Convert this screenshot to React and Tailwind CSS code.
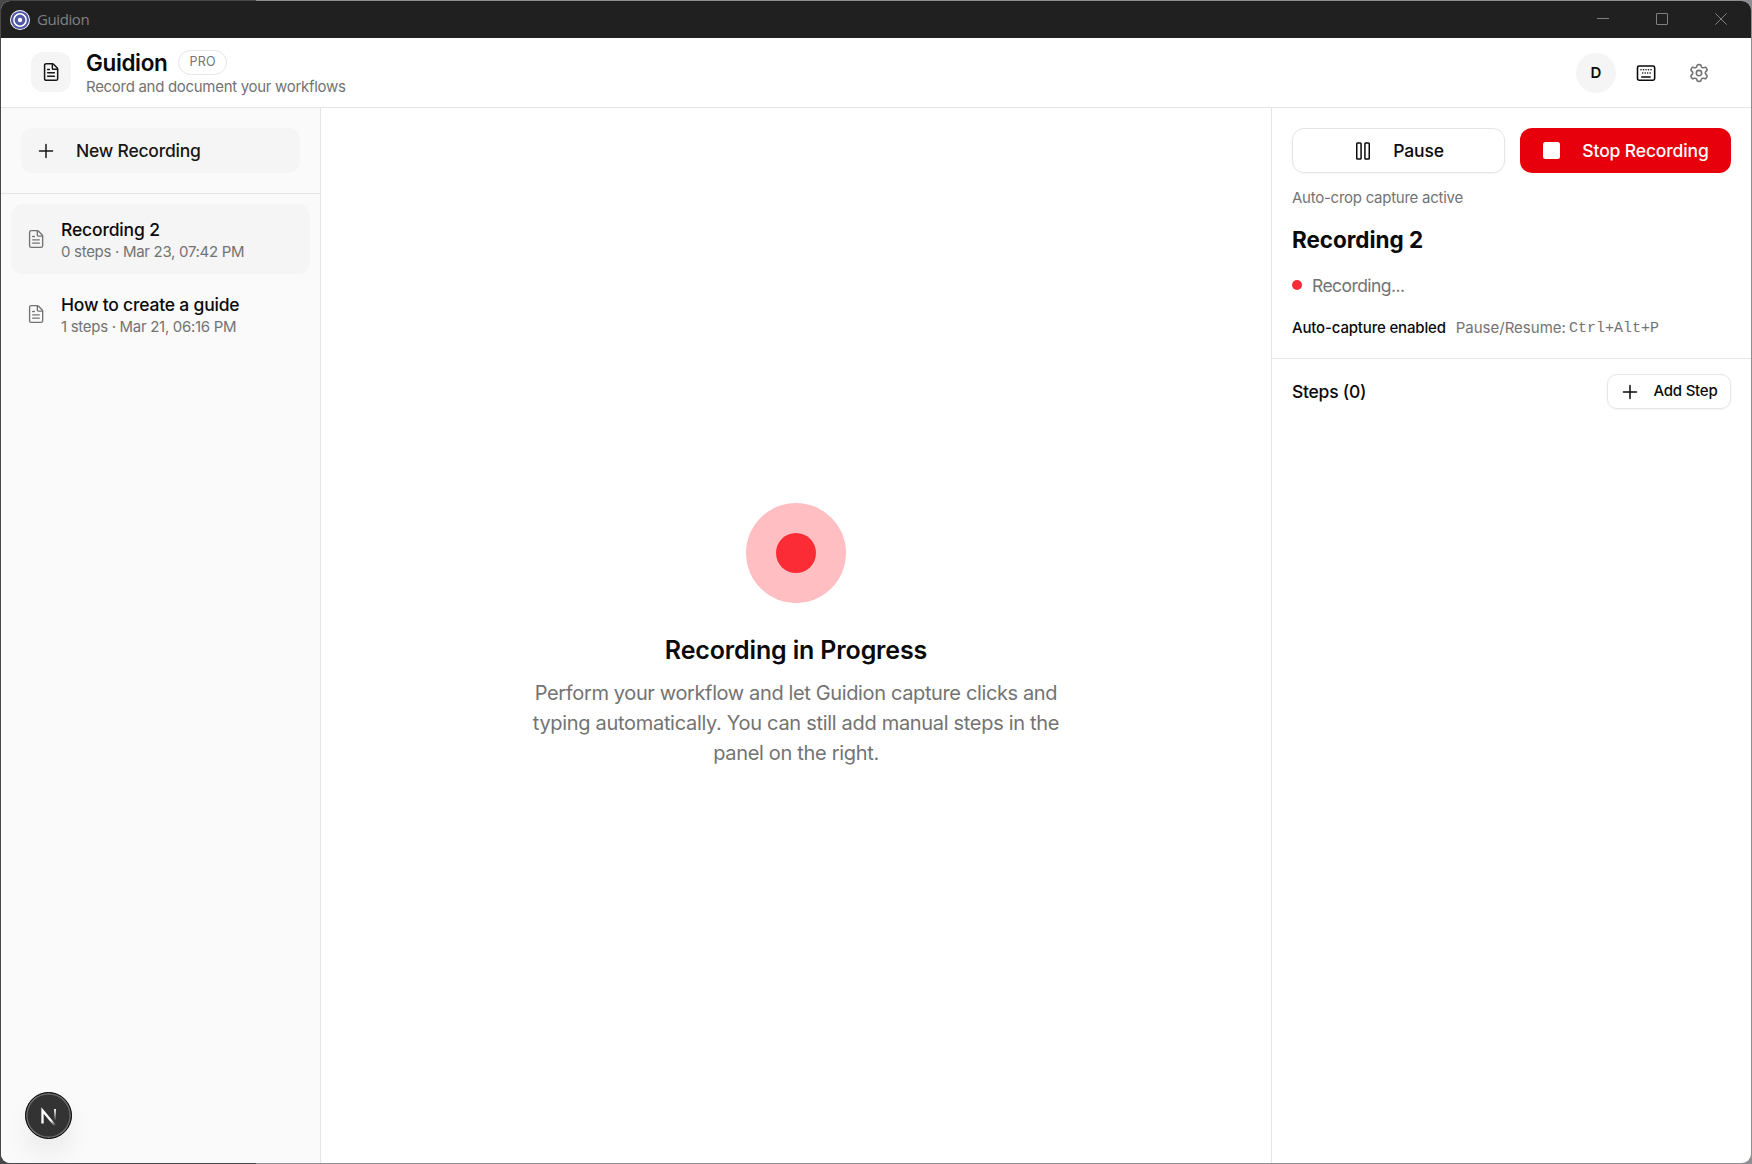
import React from "react";

function Icon({ size = 20, sw = 1.5, className = "", children }) {
  return (
    <svg width={size} height={size} viewBox="0 0 24 24" fill="none" stroke="currentColor" strokeWidth={sw} strokeLinecap="round" strokeLinejoin="round" className={"shrink-0 " + className}>
      {children}
    </svg>
  );
}

const FileIcon = (p) => (
  <Icon {...p}>
    <path d="M8 17h8M8 13h8M8 9h2" />
    <path d="M13.6 2.4V7.4a1.2 1.2 0 0 0 1.2 1.2h5" />
    <path d="M4.3 4a2 2 0 0 1 2-2h7.2c.5 0 .9.2 1.3.5l4.7 4.7c.4.4.5.8.5 1.3V20a2 2 0 0 1-2 2H6.3a2 2 0 0 1-2-2Z" />
  </Icon>
);

const PlusIcon = (p) => (
  <Icon {...p}>
    <path d="M12 4.2v15.6M4.2 12h15.6" />
  </Icon>
);

const KeyboardIcon = () => (
  <Icon size={20} sw={1.9} className="text-neutral-950">
    <rect x="1.8" y="3.6" width="20.6" height="17" rx="2" />
    <path d="M7 16.8h10" />
    <path d="M6 8h.01M9 8h.01M12 8h.01M15 8h.01M18 8h.01M8 12h.01M11 12h.01M14 12h.01M17 12h.01" />
  </Icon>
);

const GearIcon = () => (
  <Icon size={20} sw={1.9}>
    <path d="M21.3 7.1l-.5-.86c-.37-.65-.56-.97-.87-1.1-.32-.13-.68-.03-1.4.18l-1.22.34c-.46.11-.94.05-1.35-.18l-.34-.2a2 2 0 0 1-.78-.95l-.34-1c-.22-.66-.33-.99-.6-1.18-.26-.19-.6-.19-1.3-.19h-1.12c-.7 0-1.04 0-1.3.19s-.38.52-.6 1.18l-.33 1a2 2 0 0 1-.78.95l-.34.2c-.41.23-.9.3-1.35.18l-1.22-.34c-.72-.2-1.08-.31-1.4-.18-.31.13-.5.45-.87 1.1l-.5.86c-.35.61-.52.92-.49 1.24.04.32.27.58.73 1.1l1.03 1.15c.25.32.43.88.43 1.39 0 .5-.18 1.06-.43 1.38l-1.03 1.16c-.46.51-.7.77-.73 1.1-.03.32.14.62.49 1.23l.5.86c.37.65.56.97.87 1.1.32.13.68.03 1.4-.18l1.22-.34c.46-.1.94-.04 1.35.19l.34.19c.36.23.63.56.78.95l.33 1c.22.67.34 1 .6 1.19s.6.19 1.3.19h1.12c.7 0 1.04 0 1.3-.19.27-.19.38-.52.6-1.18l.34-1c.14-.4.42-.73.78-.96l.34-.19c.41-.23.89-.3 1.35-.19l1.22.34c.72.21 1.08.31 1.4.18.31-.13.5-.45.87-1.1l.5-.86c.34-.61.51-.91.48-1.24-.03-.32-.26-.58-.72-1.1l-1.04-1.15c-.25-.32-.42-.88-.42-1.38 0-.51.17-1.07.42-1.39l1.04-1.15c.46-.52.69-.78.72-1.1.03-.32-.14-.63-.48-1.24Z" />
    <circle cx="12" cy="12" r="3.2" />
  </Icon>
);

function TitleBar() {
  return (
    <div className="flex h-[37px] shrink-0 items-center bg-[#202020] pl-[9px] text-[#808080]">
      <svg width="20" height="20" viewBox="0 0 20 20" className="shrink-0">
        <circle cx="10" cy="10" r="10" fill="#fff" />
        <circle cx="10" cy="10" r="8" fill="none" stroke="#4f57a6" strokeWidth="2.2" />
        <circle cx="10" cy="10" r="3.8" fill="none" stroke="#4f57a6" strokeWidth="3.2" />
      </svg>
      <span className="ml-[7px] font-['Open_Sans','Noto_Sans',sans-serif] text-[15px] tracking-[-0.4px]">Guidion</span>
      <div className="ml-auto mr-[24px] flex items-center gap-[47px] pb-px">
        <svg width="12" height="12" fill="none" stroke="currentColor"><path d="M0 5.5h12" /></svg>
        <svg width="12" height="12" fill="none" stroke="currentColor"><rect x=".5" y=".5" width="11" height="11" rx=".5" /></svg>
        <svg width="12" height="12" fill="none" stroke="currentColor"><path d="M.3.3l11.4 11.4M11.7.3L.3 11.7" /></svg>
      </div>
    </div>
  );
}

function Header() {
  return (
    <header className="flex h-[70px] shrink-0 items-center border-b border-neutral-200 pb-px pl-[30px] pr-[32px]">
      <div className="flex size-10 items-center justify-center rounded-xl bg-neutral-100 text-neutral-900">
        <FileIcon size={20} sw={1.8} />
      </div>
      <div className="ml-[15px] pt-[4px]">
        <div className="flex h-[25px] items-center">
          <h1 className="text-[22.5px] font-semibold leading-[25px] tracking-[-0.36px]">Guidion</h1>
          <span className="ml-[11px] flex h-[25px] items-center rounded-full border border-neutral-200 px-[10px] text-[12.5px] tracking-[0.3px] text-neutral-500">PRO</span>
        </div>
        <p className="text-[15px] leading-[24px] tracking-[-0.3px] text-neutral-500">Record and document your workflows</p>
      </div>
      <div className="ml-auto flex items-center pt-px text-neutral-500">
        <div className="flex size-10 items-center justify-center rounded-full bg-neutral-100 pt-px text-[15px] font-semibold text-neutral-950">D</div>
        <div className="ml-5"><KeyboardIcon /></div>
        <div className="ml-[33px] mr-[10px]"><GearIcon /></div>
      </div>
    </header>
  );
}

function RecordingItem({ title, meta, titleClass, metaClass, active }) {
  return (
    <div className={"flex h-[70px] items-center rounded-xl pl-[15px] " + (active ? "bg-neutral-100" : "pt-px")}>
      <FileIcon size={20} sw={1.6} className="text-neutral-500" />
      <div className="ml-[15px] pt-[3px]">
        <div className={"text-[17.5px] font-medium leading-[22px] " + titleClass}>{title}</div>
        <div className={"text-[15px] leading-[21px] text-neutral-500 " + metaClass}>{meta}</div>
      </div>
    </div>
  );
}

function Sidebar() {
  return (
    <aside className="flex w-[320px] shrink-0 flex-col border-r border-neutral-200 bg-neutral-50">
      <div className="border-b border-neutral-200 px-5 pb-5 pt-5">
        <button className="flex h-[45px] w-full items-center rounded-[12px] bg-neutral-100 pl-[15px] text-[17.5px] font-medium tracking-[-0.22px] text-neutral-900">
          <PlusIcon size={20} sw={1.8} />
          <span className="ml-[20px] pt-[2px]">New Recording</span>
        </button>
      </div>
      <div className="flex flex-col gap-1 p-[10px]">
        <RecordingItem active title="Recording 2" titleClass="tracking-[-0.16px]" meta="0 steps · Mar 23, 07:42 PM" metaClass="tracking-[-0.3px]" />
        <RecordingItem title="How to create a guide" titleClass="tracking-[-0.2px]" meta="1 steps · Mar 21, 06:16 PM" metaClass="tracking-[-0.3px]" />
      </div>
      <div className="mb-[24px] ml-[24px] mt-auto flex size-[47px] items-center justify-center rounded-full border border-black bg-[#333] shadow-[inset_0_0_0_1.5px_#6b6b6b,0_16px_32px_-8px_rgba(0,0,0,0.14)]">
        <svg width="24" height="24" viewBox="0 0 24 24" fill="none" strokeWidth="2.3">
          <defs>
            <linearGradient id="diag" x1="4" y1="4" x2="19" y2="21" gradientUnits="userSpaceOnUse">
              <stop offset=".7" stopColor="#fff" />
              <stop offset="1" stopColor="#fff" stopOpacity="0" />
            </linearGradient>
            <linearGradient id="stem" x1="0" y1="4" x2="0" y2="17" gradientUnits="userSpaceOnUse">
              <stop offset="0" stopColor="#fff" />
              <stop offset="1" stopColor="#fff" stopOpacity="0" />
            </linearGradient>
          </defs>
          <path d="M5.5 19.5V6.5L18.5 22" stroke="url(#diag)" />
          <path d="M18 5v11.5" stroke="url(#stem)" strokeWidth="2" />
        </svg>
      </div>
    </aside>
  );
}

function Stage() {
  return (
    <main className="flex flex-1 flex-col items-center pt-[395px]">
      <div className="flex size-[100px] items-center justify-center rounded-full bg-[#ffbfc2]">
        <div className="size-10 rounded-full bg-[#fb2c36]" />
      </div>
      <h2 className="mt-[29px] text-[25px] font-semibold leading-[36px] tracking-[-0.15px]">Recording in Progress</h2>
      <p className="mt-[10px] text-center text-[20px] leading-[30px] text-neutral-500">
        <span className="block tracking-[-0.37px]">Perform your workflow and let Guidion capture clicks and</span>
        <span className="block tracking-[-0.31px]">typing automatically. You can still add manual steps in the</span>
        <span className="block tracking-[-0.32px]">panel on the right.</span>
      </p>
    </main>
  );
}

function ControlPanel() {
  return (
    <aside className="w-[480px] shrink-0 border-l border-neutral-200">
      <div className="h-[251px] border-b border-neutral-200 px-5 pt-5">
        <div className="flex gap-[15px]">
          <button className="flex h-[45px] w-[213px] items-center justify-center rounded-[12px] border border-neutral-200 text-[17.5px] font-medium tracking-[-0.14px] shadow-xs">
            <Icon size={20} sw={1.8}>
              <rect x="4.5" y="2.4" width="5.2" height="19.2" rx="1" />
              <rect x="14.3" y="2.4" width="5.2" height="19.2" rx="1" />
            </Icon>
            <span className="ml-[20px] pt-[2px]">Pause</span>
          </button>
          <button className="flex h-[45px] w-[211px] items-center justify-center rounded-[12px] bg-[#e7000b] pl-px text-[17.5px] font-medium tracking-[-0.14px] text-white">
            <span className="size-[17px] rounded-[2.5px] bg-white" />
            <span className="ml-[22px] pt-[2px]">Stop Recording</span>
          </button>
        </div>
        <p className="mt-[15px] text-[15px] leading-[20px] tracking-[-0.26px] text-neutral-500">Auto-crop capture active</p>
        <h2 className="mt-[14px] text-[22.5px] font-bold leading-[35px] tracking-[-0.05px]">Recording 2</h2>
        <div className="mt-[16px] flex h-[25px] items-center">
          <span className="mb-[2px] size-[10px] rounded-full bg-[#fb2c36]" />
          <span className="ml-[10px] text-[17.5px] leading-[25px] tracking-[-0.56px] text-neutral-500">Recording...</span>
        </div>
        <div className="mt-[20px] flex h-[20px] items-center whitespace-pre text-[15px]">
          <span className="font-medium tracking-[-0.17px]">Auto-capture enabled</span>
          <span className="ml-[10px] text-neutral-500">Pause/Resume:</span>
          <span className="ml-[3px] pt-[2px] font-['Liberation_Mono',monospace] text-neutral-500">Ctrl+Alt+P</span>
        </div>
      </div>
      <div className="flex items-center justify-between px-5 pt-[15px]">
        <h3 className="pt-[2px] text-[17.5px] font-medium tracking-[-0.25px]">Steps (0)</h3>
        <button className="flex h-[35px] w-[124px] items-center justify-center rounded-[10px] border border-neutral-200 text-[15px] font-medium tracking-[-0.22px] shadow-xs">
          <PlusIcon size={20} sw={1.8} />
          <span className="ml-[13px]">Add Step</span>
        </button>
      </div>
    </aside>
  );
}

export default function App() {
  return (
    <div className="h-[1164px] w-[1752px] bg-[linear-gradient(90deg,#48484a_256px,#8e8e92_256px)] p-px font-['Inter',sans-serif] text-neutral-950">
      <div className="flex h-full flex-col overflow-hidden rounded-[9px] bg-white">
        <TitleBar />
        <Header />
        <div className="flex min-h-0 flex-1">
          <Sidebar />
          <Stage />
          <ControlPanel />
        </div>
      </div>
    </div>
  );
}
